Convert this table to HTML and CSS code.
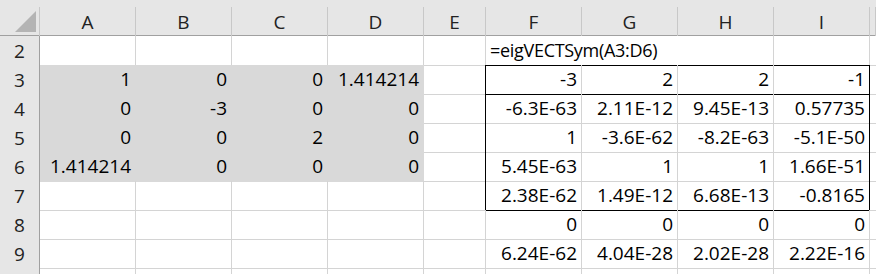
FILE: index.html
```html
<!DOCTYPE html>
<html>
<head>
    <title>eigVECTSym</title>
    <link rel="stylesheet" href="styles.css">
</head>
<body>
    <div class="sheet">
        <!-- column headers -->
        <div class="row head">
            <div class="corner">
                <svg width="39" height="28" viewBox="0 0 39 28"><polygon points="15,25 36,25 36,4" fill="#b4b4b4"/></svg>
            </div>
            <div class="ch">A</div><div class="ch">B</div><div class="ch">C</div><div class="ch">D</div>
            <div class="ch">E</div><div class="ch">F</div><div class="ch">G</div><div class="ch">H</div>
            <div class="ch">I</div><div class="ch"></div>
        </div>

        <div class="row">
            <div class="rh">2</div>
            <div class="c"></div><div class="c"></div><div class="c"></div><div class="c"></div>
            <div class="c"></div>
            <div class="c left spill kb"><span class="formula">=eigVECTSym(A3:D6)</span></div>
            <div class="c spill kb"></div><div class="c kb"></div><div class="c kb"></div>
            <div class="c"></div>
        </div>

        <div class="row">
            <div class="rh">3</div>
            <div class="c fill">1</div><div class="c fill">0</div><div class="c fill">0</div><div class="c fill">1.414214</div>
            <div class="c kr"></div>
            <div class="c kb">-3</div><div class="c kb">2</div><div class="c kb">2</div><div class="c kb kr">-1</div>
            <div class="c"></div>
        </div>

        <div class="row">
            <div class="rh">4</div>
            <div class="c fill">0</div><div class="c fill">-3</div><div class="c fill">0</div><div class="c fill">0</div>
            <div class="c kr"></div>
            <div class="c">-6.3E-63</div><div class="c">2.11E-12</div><div class="c">9.45E-13</div><div class="c kr">0.57735</div>
            <div class="c"></div>
        </div>

        <div class="row">
            <div class="rh">5</div>
            <div class="c fill">0</div><div class="c fill">0</div><div class="c fill">2</div><div class="c fill">0</div>
            <div class="c kr"></div>
            <div class="c">1</div><div class="c">-3.6E-62</div><div class="c">-8.2E-63</div><div class="c kr">-5.1E-50</div>
            <div class="c"></div>
        </div>

        <div class="row">
            <div class="rh">6</div>
            <div class="c fill">1.414214</div><div class="c fill">0</div><div class="c fill">0</div><div class="c fill">0</div>
            <div class="c kr"></div>
            <div class="c">5.45E-63</div><div class="c">1</div><div class="c">1</div><div class="c kr">1.66E-51</div>
            <div class="c"></div>
        </div>

        <div class="row">
            <div class="rh">7</div>
            <div class="c"></div><div class="c"></div><div class="c"></div><div class="c"></div>
            <div class="c kr"></div>
            <div class="c kb">2.38E-62</div><div class="c kb">1.49E-12</div><div class="c kb">6.68E-13</div><div class="c kb kr">-0.8165</div>
            <div class="c"></div>
        </div>

        <div class="row">
            <div class="rh">8</div>
            <div class="c"></div><div class="c"></div><div class="c"></div><div class="c"></div>
            <div class="c"></div>
            <div class="c">0</div><div class="c">0</div><div class="c">0</div><div class="c">0</div>
            <div class="c"></div>
        </div>

        <div class="row">
            <div class="rh">9</div>
            <div class="c"></div><div class="c"></div><div class="c"></div><div class="c"></div>
            <div class="c"></div>
            <div class="c">6.24E-62</div><div class="c">4.04E-28</div><div class="c">2.02E-28</div><div class="c">2.22E-16</div>
            <div class="c"></div>
        </div>

        <!-- next row is only partly in view -->
        <div class="row">
            <div class="rh"></div>
            <div class="c"></div><div class="c"></div><div class="c"></div><div class="c"></div>
            <div class="c"></div>
            <div class="c"></div><div class="c"></div><div class="c"></div><div class="c"></div>
            <div class="c"></div>
        </div>
    </div>
</body>
</html>
```

FILE: styles.css
```css
/* spreadsheet grid */
html, body {
    margin: 0;
    background: #fff;
    overflow: hidden;
}
.sheet {
    width: 100%;
    height: 274px;
    overflow: hidden;
    font-family: "Open Sans", Arial, sans-serif;
    font-size: 19px;
    color: #000;
}
.row {
    display: grid;
    grid-template-columns: 40px 96px 96px 96px 96px 62px 96px 96px 96px 96px 1fr;
    height: 29px;
}
.row > div {
    box-sizing: border-box;
    line-height: 28px;
    white-space: nowrap;
}

/* header row */
.head {
    height: 36px;
    padding-top: 7px;
    background: #e6e6e6;
    border-bottom: 1px solid #a0a0a0;
    box-sizing: border-box;
}
.corner {
    border-right: 1px solid #c8c8c8;
}
.corner svg {
    display: block;
}
.ch {
    text-align: center;
    color: #222;
    border-right: 1px solid #c8c8c8;
    padding-top: 1px;
}

/* row numbers */
.rh {
    background: #e6e6e6;
    color: #222;
    text-align: center;
    border-right: 1px solid #a0a0a0;
    border-bottom: 1px solid #c8c8c8;
    padding-top: 1px;
}

/* cells */
.c {
    text-align: right;
    padding: 0 4px;
    border-right: 1px solid #d4d4d4;
    border-bottom: 1px solid #d4d4d4;
}
.left {
    text-align: left;
    overflow: visible;
}
.formula {
    font-size: 18px;
    letter-spacing: -0.3px;
}
.spill {
    border-right-color: #fff;
}
.fill {
    background: #d9d9d9;
    border-color: #d9d9d9;
}
.kb {
    border-bottom-color: #000;
}
.kr {
    border-right-color: #000;
}
```
